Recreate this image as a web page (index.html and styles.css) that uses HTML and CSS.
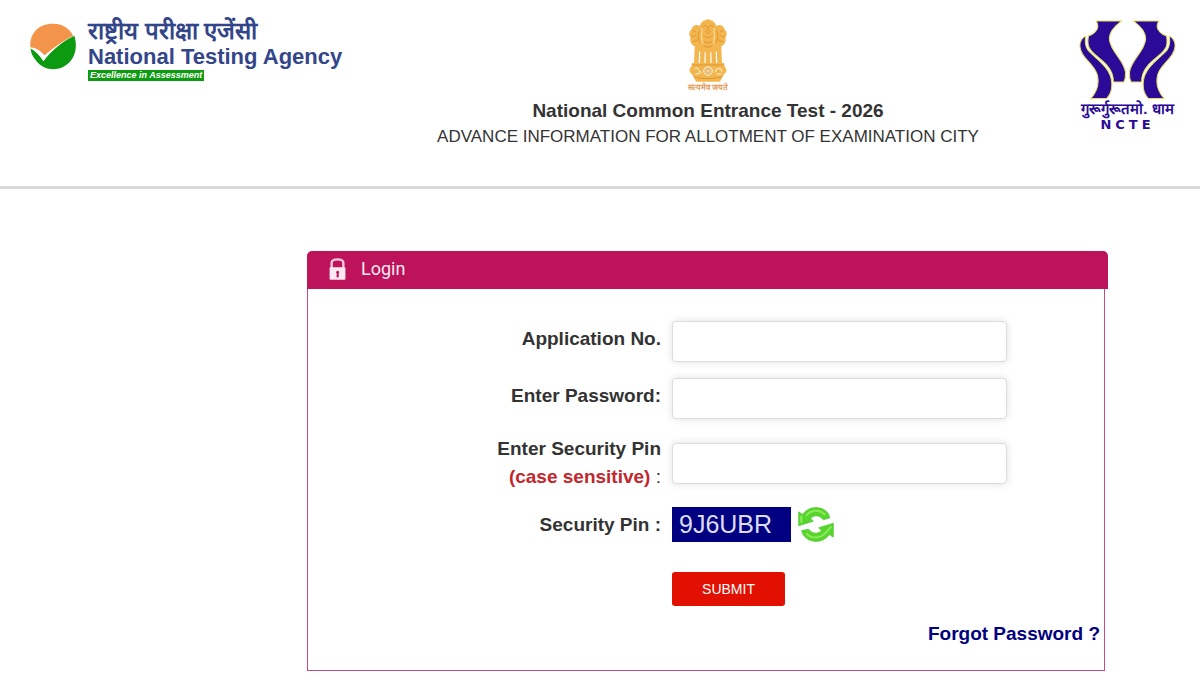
FILE: index.html
```html
<!DOCTYPE html>
<html lang="en">
<head>
    <meta charset="UTF-8">
    <meta name="viewport" content="width=device-width, initial-scale=1.0">
    <title>National Common Entrance Test - 2026</title>
    <link rel="stylesheet" href="styles.css">
</head>
<body>

    <header class="header">
        <div class="brand">
            <svg class="brand-logo" viewBox="0 0 138 140" aria-hidden="true">
                <path d="M1 72 C-2 30 28 2 68 2 C98 2 118 16 130 38 C100 52 66 78 44 96 C34 86 22 74 1 72Z" fill="#f2954a"/>
                <path d="M2 76 C16 84 30 98 40 114 C66 82 98 54 133 38 C142 66 138 96 120 116 C88 150 40 142 18 112 C8 100 2 88 2 76Z" fill="#0c9a10"/>
            </svg>
            <div class="brand-text">
                <span class="brand-hindi" lang="hi">राष्ट्रीय परीक्षा एजेंसी</span>
                <span class="brand-name">National Testing Agency</span>
                <span class="brand-tag">Excellence in Assessment</span>
            </div>
        </div>

        <div class="title">
            <svg class="emblem" viewBox="0 0 120 192" aria-hidden="true">
                <g fill="#f3b64f">
                    <!-- side lions -->
                    <path d="M36 22 C26 14 12 20 10 32 C2 38 2 48 8 54 C4 66 10 78 20 82 L26 96 L40 98 L42 30Z"/>
                    <path d="M84 22 C94 14 108 20 110 32 C118 38 118 48 112 54 C116 66 110 78 100 82 L94 96 L80 98 L78 30Z"/>
                    <!-- front lion -->
                    <path d="M42 10 C48 2 54 4 60 0 C66 4 72 2 78 10 C86 16 84 26 86 34 C90 48 88 62 84 74 L80 100 L40 100 L36 74 C32 62 30 48 34 34 C36 26 34 16 42 10Z"/>
                    <!-- legs -->
                    <path d="M20 84 L34 84 L32 132 L18 132Z M37 92 L50 92 L49 134 L36 134Z M53 92 L67 92 L67 134 L53 134Z M70 92 L83 92 L84 134 L71 134Z M86 84 L100 84 L102 132 L88 132Z"/>
                    <!-- abacus -->
                    <path d="M12 132 H108 V140 C114 146 118 154 114 160 L106 168 L96 188 H24 L14 168 L6 160 C2 154 6 146 12 140Z"/>
                </g>
                <g fill="none" stroke="#e0962f" stroke-width="3" stroke-linecap="round">
                    <path d="M46 22 C50 16 56 20 58 24 M64 24 C68 18 74 18 76 24 M52 36 L60 44 L68 36 M48 50 C54 58 66 58 72 50 M46 66 Q60 78 74 66 M48 80 Q60 90 72 80 M60 24 V36"/>
                    <path d="M14 34 L22 38 M10 52 Q18 56 22 50 M16 68 Q24 70 28 62 M106 34 L98 38 M110 52 Q102 56 98 50 M104 68 Q96 70 92 62"/>
                    <path d="M34 36 Q26 52 34 70 M86 36 Q94 52 86 70 M12 138 H108 M18 174 Q60 184 102 174"/>
                </g>
                <g fill="none" stroke="#fff3dc" stroke-width="3">
                    <path d="M20 150 q8 -8 12 2 t8 8 M82 160 q0 -12 10 -12 t10 10 M22 166 L36 162 M86 166 L100 164"/>
                    <circle cx="60" cy="156" r="13" fill="#e9b76a"/>
                    <path d="M60 144 V168 M48 156 H72 M52 148 L68 164 M68 148 L52 164" stroke-width="1"/>
                    <path d="M42 28 Q38 50 44 74 M78 28 Q82 50 76 74" stroke-width="2"/>
                </g>
            </svg>
            <span class="emblem-text" lang="hi">सत्यमेव जयते</span>
            <h1>National Common Entrance Test - 2026</h1>
            <p>ADVANCE INFORMATION FOR ALLOTMENT OF EXAMINATION CITY</p>
        </div>

        <div class="ncte">
            <svg class="ncte-logo" viewBox="40 30 288 240" aria-hidden="true">
                <g id="wing" fill="#2a0a96" stroke="#e6df62" stroke-width="3">
                    <path d="M91 36 H166 C144 52 130 70 130 88 C132 126 174 152 178 188 C179 202 177 210 173 217 H142 C143 196 136 182 122 166 C100 142 68 126 67 104 C66 94 67 86 68 80 C84 76 96 62 96 52 C96 46 94 41 91 36Z"/>
                    <path d="M60 80 C46 88 42 100 43 112 C46 146 84 162 94 194 C102 224 90 250 75 266 H122 C134 254 139 236 137 216 C134 176 94 150 70 126 C60 116 57 98 60 80Z"/>
                </g>
                <use href="#wing" transform="matrix(-1 0 0 1 368 0)"/>
            </svg>
            <span class="ncte-hindi" lang="hi">गुरूर्गुरूतमो. धाम</span>
            <span class="ncte-name">NCTE</span>
        </div>
    </header>

    <main class="panel">
        <h2 class="panel-head">
            <svg class="lock" viewBox="0 0 48 64" aria-hidden="true">
                <path d="M7 30 V14 C7 7 12 4 24 4 C36 4 41 7 41 14 V30" fill="none" stroke="#f3c6db" stroke-width="7"/>
                <rect x="1" y="27" width="46" height="36" rx="3" fill="#fbe9f1"/>
                <path d="M24 37 a5 5 0 0 1 3 9 L28 56 H21 L22 46 a5 5 0 0 1 2 -9Z" fill="#bc135b"/>
            </svg>
            Login
        </h2>

        <form class="panel-body">
            <div class="row">
                <label for="appNo">Application No.</label>
                <input type="text" id="appNo">
            </div>
            <div class="row">
                <label for="password">Enter Password:</label>
                <input type="password" id="password">
            </div>
            <div class="row row-pin">
                <label for="pin">Enter Security Pin<br><span class="red">(case sensitive)</span> <span class="colon">:</span></label>
                <input type="text" id="pin">
            </div>
            <div class="row">
                <span class="label">Security Pin :</span>
                <div class="captcha">
                    <span class="captcha-code">9J6UBR</span>
                    <button type="button" class="refresh" aria-label="Refresh">
                        <svg viewBox="0 0 108 104" aria-hidden="true">
                            <g fill="#58d62e" stroke="#4cc228" stroke-width="2" stroke-linejoin="round">
                                <path d="M2 14 L14 22 C28 0 66 -8 88 16 C92 20 94 26 95 32 L76 38 C66 24 48 22 38 34 L46 42 L2 56Z"/>
                                <path d="M106 90 L94 82 C80 104 42 112 20 88 C14 82 12 76 11 70 L32 66 C42 80 60 82 70 70 L62 62 L106 48Z"/>
                            </g>
                            <g fill="none" stroke="#8eea5c" stroke-width="6" stroke-linecap="round">
                                <path d="M26 24 C40 8 64 6 80 22 M10 28 V44"/>
                                <path d="M26 80 C42 96 66 94 82 78 L98 60"/>
                            </g>
                        </svg>
                    </button>
                </div>
            </div>
            <div class="row row-submit">
                <button type="submit" class="submit">SUBMIT</button>
            </div>
            <a href="#" class="forgot">Forgot Password ?</a>
        </form>
    </main>

</body>
</html>
```
FILE: styles.css
```css
* {
    box-sizing: border-box;
}

body {
    margin: 0;
    background: #fff;
    color: #333;
    font-family: "Liberation Sans", Arial, sans-serif;
    font-size: 19px;
}

/* Header */
.header {
    display: flex;
    justify-content: space-between;
    align-items: flex-start;
    padding: 19px 24px 36px 30px;
    border-bottom: 3px solid #dadada;
}

.brand {
    display: flex;
    gap: 12px;
    width: 307px;
    white-space: nowrap;
}

.brand-logo {
    flex-shrink: 0;
    width: 46px;
    height: 47px;
    margin-top: 4px;
}

.brand-text {
    display: flex;
    flex-direction: column;
    align-items: flex-start;
    color: #34468a;
    font-weight: bold;
}

.brand-hindi {
    font-size: 24px;
    line-height: 24px;
}

.brand-name {
    font-size: 22px;
    line-height: 27px;
}

.brand-tag {
    padding: 0 2px;
    background: #0c9a10;
    color: #fff;
    font-size: 9px;
    line-height: 11px;
    font-style: italic;
}

.title {
    display: flex;
    flex-direction: column;
    align-items: center;
    text-align: center;
}

.emblem {
    width: 40px;
    height: 64px;
}

.emblem-text {
    color: #e39a55;
    font-size: 8px;
    line-height: 10px;
    font-weight: bold;
    margin-bottom: 4px;
}

.title h1 {
    margin: 0;
    font-size: 19px;
    line-height: 27px;
}

.title p {
    margin: 0;
    font-size: 17px;
    line-height: 26px;
}

.ncte {
    display: flex;
    flex-direction: column;
    align-items: center;
    color: #2a0a96;
    font-weight: bold;
}

.ncte-logo {
    width: 97px;
    height: 81px;
}

.ncte-hindi {
    font-size: 15px;
    line-height: 18px;
}

.ncte-name {
    font-family: "DejaVu Sans", sans-serif;
    font-size: 13px;
    line-height: 14px;
    letter-spacing: 4px;
}

/* Login panel */
.panel {
    margin: 62px 92px 28px 307px;
}

.panel-head {
    display: flex;
    align-items: center;
    gap: 15px;
    margin: 0;
    padding: 0 22px 2px;
    background: #bc135b;
    border-radius: 5px 5px 0 0;
    color: #fbe9f1;
    font-family: Roboto, sans-serif;
    font-size: 18px;
    font-weight: normal;
    line-height: 36px;
}

.lock {
    width: 17px;
    height: 22px;
}

.panel-body {
    display: flex;
    flex-direction: column;
    gap: 16px;
    margin-right: 3px;
    padding: 32px 4px 24px 0;
    border: 1px solid #c64c80;
    border-top: none;
}

.row {
    display: grid;
    grid-template-columns: 353px 335px;
    column-gap: 11px;
}

.row label,
.label {
    text-align: right;
    font-weight: bold;
    line-height: 36px;
}

.row-pin {
    align-items: center;
}

.row-pin label {
    line-height: 28px;
}

.red {
    color: #c1272d;
}

.colon {
    font-weight: normal;
}

.row input {
    width: 100%;
    height: 41px;
    padding: 6px 12px;
    border: 1px solid #dcdcdc;
    border-radius: 4px;
    background: #fff;
    box-shadow: 0 0 8px rgba(0, 0, 0, 0.12);
    font-size: 16px;
}

.captcha {
    display: flex;
    gap: 7px;
}

.captcha-code {
    width: 119px;
    height: 35px;
    padding-left: 7px;
    background: #000080;
    color: #dcdcf5;
    font-size: 25px;
    line-height: 35px;
}

.refresh {
    width: 36px;
    height: 35px;
    padding: 0;
    border: none;
    background: none;
    cursor: pointer;
}

.refresh svg {
    display: block;
    width: 36px;
    height: 35px;
}

.row-submit {
    margin-top: 13px;
}

.submit {
    grid-column: 2;
    justify-self: start;
    width: 113px;
    height: 34px;
    border: none;
    border-radius: 3px;
    background: #e11000;
    color: #fff;
    font-family: "Liberation Sans", Arial, sans-serif;
    font-size: 14px;
    cursor: pointer;
}

.forgot {
    align-self: flex-end;
    color: #000080;
    font-weight: bold;
    line-height: 24px;
    text-decoration: none;
}
```
